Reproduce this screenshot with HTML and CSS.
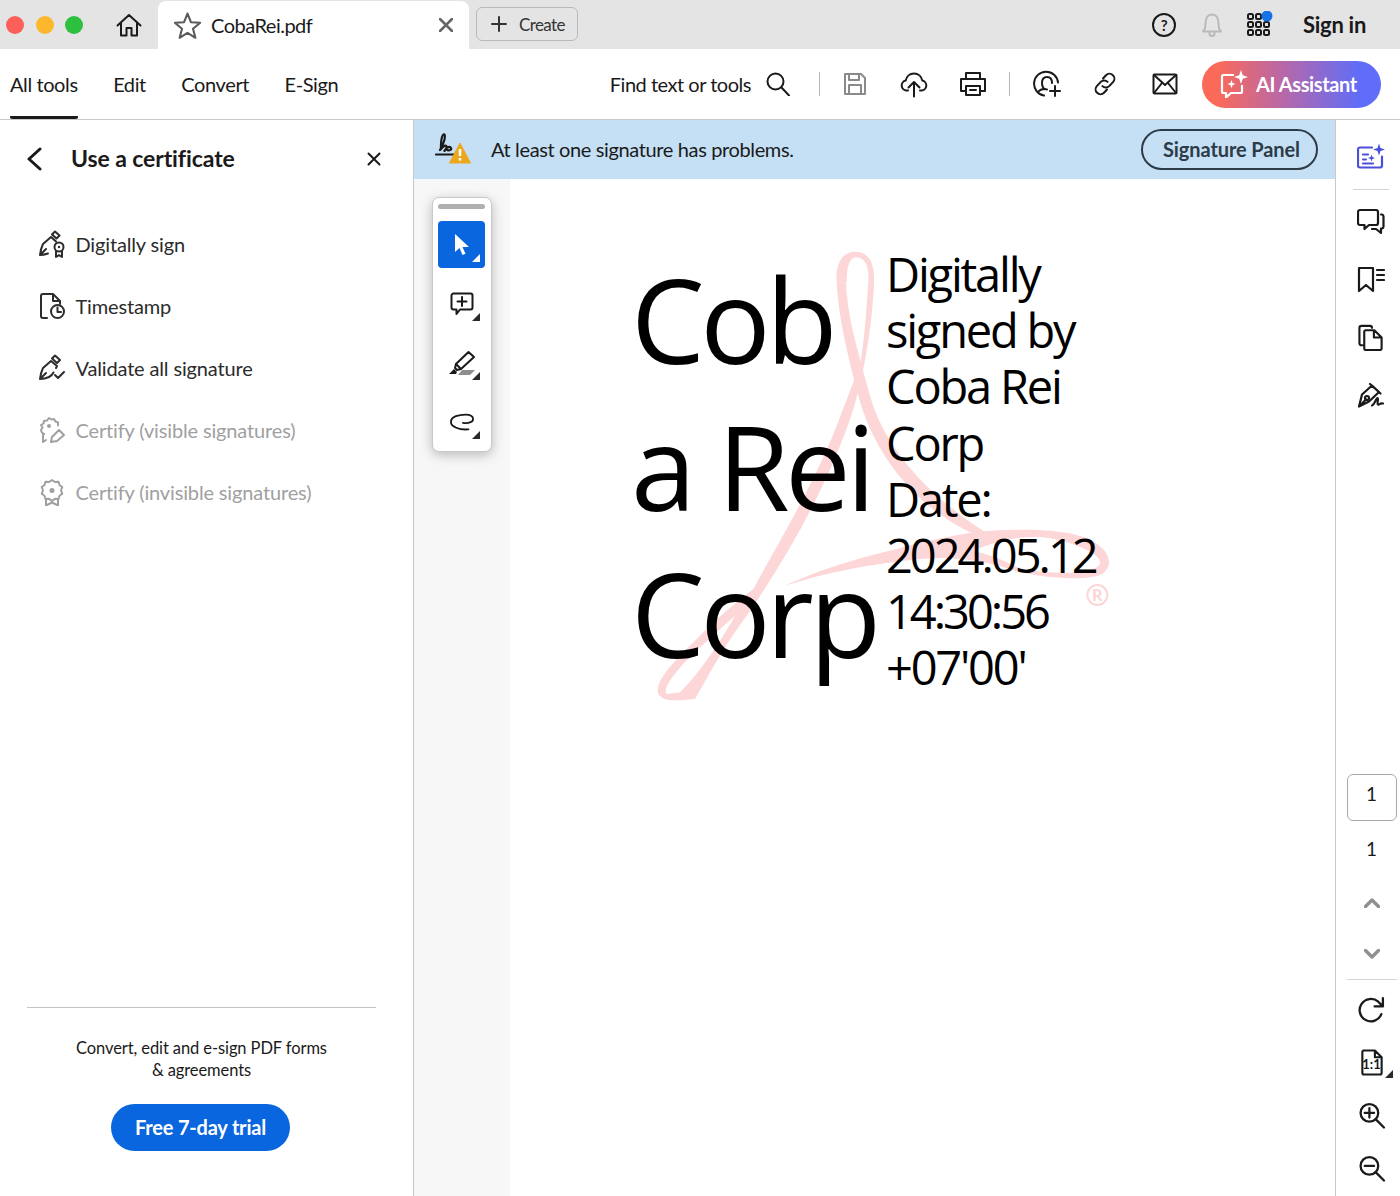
FILE: index.html
```html
<!DOCTYPE html>
<html lang="en">
<head>
  <meta charset="UTF-8" />
  <title>CobaRei.pdf</title>
  <link rel="stylesheet" href="styles.css">
</head>
<body>
  <div class="app">

    <!-- Title bar -->
    <header class="titlebar">
      <div class="lights">
        <span class="light red"></span>
        <span class="light yellow"></span>
        <span class="light green"></span>
      </div>
      <svg class="ic home" viewBox="0 0 26 24"><path d="M1.5 12.5 13 2l11.5 10.5M5 10v12.5h5.500V15h5v7.500H21V10"/></svg>
      <div class="tab">
        <svg class="ic star" viewBox="0 0 26 26"><path d="M13 1.500l3.300 8.300 8.900.6-6.900 5.700 2.300 8.700L13 20l-7.600 4.800 2.300-8.700L.8 10.400l8.900-.6z"/></svg>
        <span class="tab-name">CobaRei.pdf</span>
        <svg class="ic tab-x" viewBox="0 0 14 14"><path d="M1 1l12 12M13 1 1 13"/></svg>
      </div>
      <div class="create">
        <svg class="ic plus" viewBox="0 0 16 16"><path d="M8 1v14M1 8h14"/></svg>
        <span>Create</span>
      </div>
      <div class="title-right">
        <div class="help">?</div>
        <svg class="ic bell" viewBox="0 0 24 26"><path d="M3 19.500c2-2 2.500-4 2.500-8C5.500 6 8 2.500 12 2.500s6.500 3.500 6.500 9c0 4 .5 6 2.500 8zM9.500 20v1.500a2.500 2.500 0 0 0 5 0V20"/></svg>
        <svg class="apps" viewBox="0 0 26 26">
          <g class="apps-cells">
            <rect x="1" y="3" width="5" height="5" rx="1.500"/><rect x="9" y="3" width="5" height="5" rx="1.500"/>
            <rect x="1" y="11" width="5" height="5" rx="1.500"/><rect x="9" y="11" width="5" height="5" rx="1.500"/><rect x="17" y="11" width="5" height="5" rx="1.500"/>
            <rect x="1" y="19" width="5" height="5" rx="1.500"/><rect x="9" y="19" width="5" height="5" rx="1.500"/><rect x="17" y="19" width="5" height="5" rx="1.500"/>
          </g>
          <circle class="apps-dot" cx="20" cy="5" r="5.500"/>
        </svg>
        <span class="signin">Sign in</span>
      </div>
    </header>

    <!-- Main toolbar -->
    <nav class="toolbar">
      <ul class="tabs">
        <li class="active">All tools</li>
        <li>Edit</li>
        <li>Convert</li>
        <li>E-Sign</li>
      </ul>
      <div class="actions">
        <span class="find">Find text or tools</span>
        <svg class="ic search" viewBox="0 0 24 24"><circle cx="9.500" cy="9.500" r="8"/><path d="M15.500 15.500l7.500 8"/></svg>
        <span class="sep sep-a"></span>
        <svg class="ic save" viewBox="0 0 24 24"><path d="M2 2h16l4 4v16H2zM6 2v6h10V2M6 22v-9h12v9"/></svg>
        <svg class="ic cloud" viewBox="0 0 28 26"><path d="M8 19H6.500a5 5 0 0 1-.8-9.900C6.500 5 9.800 2 14 2s7.500 3 8.300 7.100a5 5 0 0 1-.8 9.900H20M14 25V11M8.500 16 14 10.500l5.500 5.500"/></svg>
        <svg class="ic print" viewBox="0 0 28 26"><path d="M7 8V2h14v6M7 20H2V8h24v12h-5M7 15h14v9H7zM11 19h6"/></svg>
        <span class="sep sep-b"></span>
        <svg class="ic userplus" viewBox="0 0 28 28"><path d="M11 25.500A12 12 0 1 1 25 12.500M14 19.500c-4 0-5-2.500-5-6.500s2-6 5-6 5 2 5 6M22 16v10M17 21h10"/><path d="M5 22c1.500-2 4-3 7-3"/></svg>
        <svg class="ic link" viewBox="0 0 24 24"><path d="M10 6.500l3-3.200a4.800 4.800 0 0 1 7 6.800l-3.800 4a4.800 4.800 0 0 1-6.800 0M14 17.500l-3 3.200a4.800 4.800 0 0 1-7-6.800l3.800-4a4.800 4.800 0 0 1 6.800 0"/></svg>
        <svg class="ic mail" viewBox="0 0 26 22"><rect x="1.500" y="1.500" width="23" height="19" rx="1"/><path d="M2 2l11 10L24 2M2 20l8-10M24 20l-8-10"/></svg>
        <div class="ai-btn">
          <svg class="ai-ic" viewBox="0 0 28 28"><path class="ai-line" d="M14 5H3.500A1.500 1.500 0 0 0 2 6.500v15A1.500 1.500 0 0 0 3.500 23H6v4.500l5-4.500h9.500a1.500 1.500 0 0 0 1.500-1.500V15"/><path class="ai-fill" d="M21 0l1.800 5.200L28 7l-5.200 1.800L21 14l-1.800-5.200L14 7l5.200-1.800zM11.500 10l1.100 3 3 1.100-3 1.100-1.100 3-1.100-3-3-1.100 3-1.100z"/></svg>
          <span>AI Assistant</span>
        </div>
      </div>
    </nav>

    <div class="body">

      <!-- Left panel -->
      <aside class="panel">
        <div class="panel-head">
          <svg class="ic back" viewBox="0 0 16 24"><path d="M14 2 3 12l11 10"/></svg>
          <h2>Use a certificate</h2>
          <svg class="ic panel-x" viewBox="0 0 14 14"><path d="M1.500 1.500l11 11M12.500 1.500l-11 11"/></svg>
        </div>
        <ul class="menu">
          <li>
            <svg class="ic menu-ic" viewBox="0 0 28 28"><path d="M2 25c.5-4 1.500-8 3-11l8-7 5 4.500M14 4.500l3-3 4.500 4-3 3zM2 25c3 0 5-.5 8-1.500M2 25l6-6"/><circle cx="21" cy="17" r="4.500"/><circle class="solid" cx="21" cy="17" r="1.200"/><path d="M18 21.500V27l3-1.800 3 1.800v-5.500"/></svg>
            <span>Digitally sign</span>
          </li>
          <li>
            <svg class="ic menu-ic" viewBox="0 0 28 28"><path d="M9 26H5a2 2 0 0 1-2-2V4a2 2 0 0 1 2-2h10l7 7v3M15 2v7h7"/><circle cx="19.500" cy="19.500" r="6.500"/><path d="M19.500 15.500v4.500h3.500"/></svg>
            <span>Timestamp</span>
          </li>
          <li>
            <svg class="ic menu-ic" viewBox="0 0 28 28"><path d="M2 25c.5-4 1.500-8 3-11l8-7 6 5-1 2M14 4.500l3-3 5 4.500-3 3zM2 25c3 0 6-.5 9-2 2-1 3.500-2.500 4.500-4.500M2 25l6-6M17 21l3 3 6-6"/></svg>
            <span>Validate all signature</span>
          </li>
          <li class="off">
            <svg class="ic menu-ic" viewBox="0 0 28 28"><path d="M6 18a5 5 0 0 1-3-4l1.500-2.500L3 9l2.500-1.500L6 5l3-.5L11 2l2.500 1.500L16 3l1.500 2.500 2.500 1v3"/><circle class="solid" cx="11" cy="10" r="2"/><path d="M5 18v8l3-2M13 26l1-5 7-7 5 5-7 6z"/></svg>
            <span>Certify (visible signatures)</span>
          </li>
          <li class="off">
            <svg class="ic menu-ic" viewBox="0 0 28 28"><path d="M14 2l3 2 3.500-.3 1 3.300 2.800 2L23 12.500l1.300 3.300-2.800 2-1 3.300-3.500-.3-3 2-3-2-3.500.3-1-3.300-2.800-2L5 12.500 3.700 9l2.800-2 1-3.300 3.500.3z"/><circle class="solid" cx="14" cy="12.500" r="2.500"/><path d="M8 21v6.500l6-3 6 3V21"/></svg>
            <span>Certify (invisible signatures)</span>
          </li>
        </ul>
        <div class="panel-foot">
          <p>Convert, edit and e-sign PDF forms<br>&amp; agreements</p>
          <div class="trial">Free 7-day trial</div>
        </div>
      </aside>

      <!-- Document -->
      <main class="doc">
        <div class="banner">
          <svg class="sig-ic" viewBox="0 0 36 32">
            <path class="sig-ink" d="M1 22.500h18M5 18C8 13 11 5 9.500 2.500 7.500 1 5.500 8 6 17M6 17c3-4 6-4.500 5.500-1.500S8 20 10 18c2-3 5-4 6-2s-2 3-3.500 2"/>
            <path class="sig-warn" d="M25 11 35.500 31h-21z"/>
            <path class="sig-mark" d="M25 17v7M25 26v2.500"/>
          </svg>
          <span class="banner-text">At least one signature has problems.</span>
          <div class="sig-panel">Signature Panel</div>
        </div>
        <div class="viewer">
          <div class="gutter">
            <div class="float-tools">
              <div class="handle"></div>
              <div class="ft on">
                <svg class="cursor" viewBox="0 0 16 24"><path d="M1 1v18l4.500-4 3 7 3-1.300-3-6.700H15z"/></svg>
                <span class="tri"></span>
              </div>
              <div class="ft">
                <svg class="ic ft-ic" viewBox="0 0 24 24"><path d="M3.500 1.500h17a2 2 0 0 1 2 2v12a2 2 0 0 1-2 2H10L6.500 22v-4.500h-3a2 2 0 0 1-2-2v-12a2 2 0 0 1 2-2zM12 5v9M7.500 9.500h9"/></svg>
                <span class="tri"></span>
              </div>
              <div class="ft">
                <svg class="hl" viewBox="0 0 28 26"><path class="hl-body" d="M20.500 2 26 7 13 19l-5-5zM8 14l-1 4 2 2 4-1"/><path class="hl-tip" d="M1 24l5-5 3 3-1 2z"/><path class="hl-bar" d="M14 20h13l-5 5H10z"/></svg>
                <span class="tri"></span>
              </div>
              <div class="ft">
                <svg class="ic ft-ic" viewBox="0 0 26 18"><path d="M20 17C10 18 1 14 1 9 1 3 10 1 17 1c5 0 8 2 8 5s-5 5-11 4"/></svg>
                <span class="tri"></span>
              </div>
            </div>
          </div>
          <div class="page">
            <div class="stamp">
              <svg class="acro" viewBox="0 0 1500 1410">
                <path d="M650 130C655 230 680 340 715 470 760 640 880 800 1060 885L1130 900C960 800 800 650 750 470 715 340 680 230 678 130Z"/>
                <path fill-rule="evenodd" d="M650 130C645 70 670 38 705 38 745 38 765 70 762 130 758 240 735 400 700 510 640 700 520 930 380 1130 320 1210 270 1300 225 1380 170 1385 130 1390 115 1365 105 1330 150 1280 200 1230 250 1180 300 1130 350 1090L400 1050C470 920 580 740 650 560L715 390C695 320 678 220 680 130ZM680 130C680 80 690 55 708 55 735 55 748 80 745 130 740 200 735 300 718 390 700 320 680 220 680 130ZM140 1365C125 1350 170 1290 240 1225 280 1190 310 1160 345 1130 300 1210 240 1300 180 1360Z"/>
                <path fill-rule="evenodd" d="M1060 880C1180 868 1330 868 1400 898 1465 925 1485 975 1450 1002 1420 1025 1300 1022 1200 1000 1100 965 1000 950 900 960 750 975 620 1000 495 1040 580 1000 700 960 830 930 900 910 1000 890 1060 880ZM1270 895C1350 905 1450 945 1440 975 1420 1010 1300 1005 1200 990 1150 960 1100 945 1060 935 1130 905 1200 890 1270 895Z"/>
                <circle class="acro-r" cx="1432" cy="1068" r="30"/>
                <text class="acro-rt" x="1432" y="1086">R</text>
              </svg>
              <div class="stamp-name">Cob<br>a Rei<br>Corp</div>
              <div class="stamp-info">Digitally<br>signed by<br>Coba Rei<br>Corp<br>Date:<br><span class="digits">2024.05.12</span><br><span class="digits">14:30:56</span><br>+07'00'</div>
            </div>
          </div>
        </div>
      </main>

      <!-- Right rail -->
      <aside class="rail">
        <div class="rail-top">
          <svg class="ic rail-ic ai-rail" viewBox="0 0 28 26"><path d="M15 4H3a2 2 0 0 0-2 2v16a2 2 0 0 0 2 2h20a2 2 0 0 0 2-2V13M6 11h5M6 16h3M6 20h10"/><path class="solid" d="M22 0l1.500 4.500L28 6l-4.500 1.500L22 12l-1.500-4.500L16 6l4.500-1.500zM14.500 11l.9 2.600 2.600.9-2.600.9-.9 2.600-.9-2.600-2.600-.9 2.600-.9z"/></svg>
          <span class="rail-sep"></span>
          <svg class="ic rail-ic" viewBox="0 0 28 26"><path d="M3 1.500h16a2 2 0 0 1 2 2v11a2 2 0 0 1-2 2h-7l-4.500 4v-4H3a2 2 0 0 1-2-2v-11a2 2 0 0 1 2-2zM24 6h1a2 2 0 0 1 1.500 2v10a2 2 0 0 1-1.500 2h-1v4.500L19 20.500h-4"/></svg>
          <svg class="ic rail-ic" viewBox="0 0 28 26"><path d="M2 1.500h14v23l-7-6-7 6zM20 3.500h7M20 8.500h7M20 13.500h7"/></svg>
          <svg class="ic rail-ic" viewBox="0 0 28 28"><path d="M5 22H4a2 2 0 0 1-2-2V4a2 2 0 0 1 2-2h9a2 2 0 0 1 2 2M7 8a1.500 1.500 0 0 1 1.500-1.500h9L25 14v11.500a1.500 1.500 0 0 1-1.500 1.500h-15A1.500 1.500 0 0 1 7 25.500zM17 6.500V14h8"/></svg>
          <svg class="ic rail-ic" viewBox="0 0 28 26"><path d="M2 24l3-12L15 3l7 6.500-10 9.500zM2 24l7-7M13 1.500l10.500 9.500"/><circle cx="10" cy="15.500" r="2"/><path d="M15 23c3-1 4-8 5.500-7.500s-1 6 .5 6.500 2-2 5-1"/></svg>
        </div>
        <div class="rail-bottom">
          <div class="page-box">1</div>
          <div class="page-total">1</div>
          <svg class="ic chev" viewBox="0 0 16 10"><path d="M1.500 8.500 8 2l6.500 6.500"/></svg>
          <svg class="ic chev" viewBox="0 0 16 10"><path d="M1.500 1.500 8 8l6.500-6.500"/></svg>
          <span class="rail-sep wide"></span>
          <svg class="ic rail-ic" viewBox="0 0 26 26"><path d="M22 17.500A10.800 10.800 0 1 1 19 5.500L23.500 10M23.500 2v8h-8"/></svg>
          <div class="fit">
            <svg class="ic rail-ic" viewBox="0 0 24 28"><path d="M3 1.500h12l7 7V25a1.500 1.500 0 0 1-1.500 1.500h-17A1.500 1.500 0 0 1 2 25V3a1.500 1.500 0 0 1 1-1.500zM15 1.500v7h7"/></svg>
            <span class="fit-label">1:1</span>
            <span class="tri"></span>
          </div>
          <svg class="ic rail-ic" viewBox="0 0 26 26"><circle cx="10.500" cy="10.500" r="8.500"/><path d="M16.500 16.500l8 8M10.500 6v9M6 10.500h9"/></svg>
          <svg class="ic rail-ic" viewBox="0 0 26 26"><circle cx="10.500" cy="10.500" r="8.500"/><path d="M16.500 16.500l8 8M6 10.500h9"/></svg>
        </div>
      </aside>
    </div>
  </div>
</body>
</html>
```

FILE: styles.css
```css
* {
  box-sizing: border-box;
}
body {
  margin: 0;
  font-family: Lato, "Noto Sans", sans-serif;
  color: #1a1a1a;
  background: #fff;
}
ul {
  list-style: none;
  margin: 0;
  padding: 0;
}
.app {
  width: 1400px;
  height: 1196px;
  display: flex;
  flex-direction: column;
  overflow: hidden;
}
.ic {
  fill: none;
  stroke: currentColor;
  stroke-width: 2;
  stroke-linecap: round;
  stroke-linejoin: round;
  flex: none;
  display: block;
}
.ic .solid {
  fill: currentColor;
  stroke: none;
}

/* title bar */
.titlebar {
  height: 49px;
  flex: none;
  background: #e4e4e4;
  display: flex;
  align-items: center;
  padding-left: 6px;
}
.lights {
  display: flex;
  gap: 11.5px;
}
.light {
  width: 18px;
  height: 18px;
  border-radius: 50%;
}
.red { background: #fb5f57; }
.yellow { background: #fdb72c; }
.green { background: #2cc03e; }
.home {
  width: 26px;
  height: 24px;
  margin-left: 33px;
  margin-right: 16px;
}
.tab {
  width: 311px;
  height: 48px;
  margin-top: 1px;
  align-self: flex-start;
  background: #fff;
  border-radius: 8px 8px 0 0;
  display: flex;
  align-items: center;
  padding: 0 8px 0 16px;
}
.star {
  width: 27px;
  height: 27px;
  color: #5a5a5a;
}
.tab-name {
  font-size: 20px;
  letter-spacing: -0.5px;
  margin-left: 10px;
  flex: 1;
}
.tab-x {
  width: 14px;
  height: 14px;
  stroke-width: 2.6;
  color: #666;
  margin-right: 8px;
}
.create {
  width: 102px;
  height: 34px;
  margin-left: 7px;
  margin-top: -1px;
  border: 1px solid #b9b9b9;
  border-radius: 6px;
  display: flex;
  align-items: center;
  padding-left: 14px;
  font-size: 17px;
  letter-spacing: -0.6px;
  color: #333;
  gap: 12px;
}
.plus {
  width: 16px;
  height: 16px;
}
.title-right {
  margin-left: auto;
  display: flex;
  align-items: center;
}
.help {
  width: 24px;
  height: 24px;
  border: 2px solid #1a1a1a;
  border-radius: 50%;
  text-align: center;
  font-size: 15px;
  font-weight: 700;
  line-height: 20px;
}
.bell {
  width: 24px;
  height: 26px;
  color: #b9b9b9;
  margin-left: 24px;
}
.apps {
  width: 26px;
  height: 26px;
  margin-left: 23px;
  margin-top: -2px;
}
.apps-cells rect {
  fill: none;
  stroke: #1a1a1a;
  stroke-width: 2;
}
.apps-dot {
  fill: #1473e6;
}
.signin {
  font-size: 22px;
  font-weight: 700;
  letter-spacing: -0.3px;
  margin-left: 30px;
  margin-right: 34px;
}

/* toolbar */
.toolbar {
  height: 71px;
  flex: none;
  border-bottom: 1px solid #c9c9c9;
  display: flex;
  align-items: stretch;
}
.tabs {
  display: flex;
  gap: 35.5px;
  padding-left: 10px;
}
.tabs li {
  font-size: 20px;
  line-height: 70px;
  height: 70px;
  letter-spacing: -0.4px;
}
.tabs .active {
  border-bottom: 3px solid #1a1a1a;
  border-radius: 0 0 2px 2px;
}
.actions {
  margin-left: auto;
  display: flex;
  align-items: center;
  padding-right: 19px;
}
.find {
  font-size: 20px;
  letter-spacing: -0.48px;
}
.search { width: 24px; height: 24px; margin-left: 15px; }
.sep {
  width: 1px;
  height: 24px;
  background: #b5b5b5;
}
.sep-a { margin-left: 29px; }
.save { width: 24px; height: 24px; margin-left: 23px; color: #8a8a8a; }
.cloud { width: 28px; height: 27px; margin-left: 33px; }
.print { width: 28px; height: 26px; margin-left: 31px; }
.sep-b { margin-left: 22px; }
.userplus { width: 28px; height: 28px; margin-left: 23px; }
.link { width: 24px; height: 24px; margin-left: 32px; }
.mail { width: 26px; height: 22px; margin-left: 35px; }
.ai-btn {
  width: 179px;
  height: 47px;
  margin-left: 24px;
  border-radius: 24px;
  background: linear-gradient(90deg, #fb6a58 0%, #fb6a58 8%, #b868a8 45%, #5f6df8 88%);
  color: #fff;
  display: flex;
  align-items: center;
  padding-left: 18px;
  gap: 8px;
  font-size: 20px;
  font-weight: 700;
  letter-spacing: -0.4px;
}
.ai-ic { width: 28px; height: 28px; flex: none; }
.ai-line { fill: none; stroke: #fff; stroke-width: 2.2; stroke-linejoin: round; }
.ai-fill { fill: #fff; }

/* layout below toolbar */
.body {
  flex: 1;
  display: flex;
  min-height: 0;
}

/* left panel */
.panel {
  width: 414px;
  flex: none;
  border-right: 1px solid #c9c9c9;
  display: flex;
  flex-direction: column;
}
.panel-head {
  height: 78px;
  display: flex;
  align-items: center;
  padding: 0 32px 0 26px;
}
.back { width: 16px; height: 24px; stroke-width: 3; }
.panel-head h2 {
  margin: -2px 0 0 29px;
  font-size: 23px;
  font-weight: 700;
  letter-spacing: -0.1px;
  flex: 1;
}
.panel-x { width: 14px; height: 14px; }
.menu {
  margin-top: 15px;
  padding-left: 38px;
}
.menu li {
  height: 62px;
  display: flex;
  align-items: center;
  gap: 9.5px;
  font-size: 20px;
  letter-spacing: -0.15px;
  color: #2c2c2c;
}
.menu .off {
  color: #a0a0a0;
}
.menu-ic {
  width: 28px;
  height: 28px;
  stroke-width: 2;
}
.panel-foot {
  margin: auto 37px 0 27px;
  border-top: 1px solid #c4c4c4;
  height: 189px;
  text-align: center;
}
.panel-foot p {
  margin: 29px 0 0;
  font-size: 16.5px;
  line-height: 22px;
  letter-spacing: -0.1px;
}
.trial {
  width: 179px;
  height: 47px;
  margin: 23px 0 0 84px;
  border-radius: 24px;
  background: #0a66de;
  color: #fff;
  font-size: 20px;
  font-weight: 700;
  line-height: 47px;
  letter-spacing: -0.2px;
}

/* document */
.doc {
  flex: 1;
  min-width: 0;
  display: flex;
  flex-direction: column;
}
.banner {
  height: 59px;
  flex: none;
  background: #c5e0f5;
  display: flex;
  align-items: center;
  padding: 0 17px 0 21px;
}
.sig-ic { width: 36px; height: 32px; margin-top: -3px; }
.sig-ink { fill: none; stroke: #1a1a1a; stroke-width: 2.2; stroke-linecap: round; }
.sig-warn { fill: #eda71c; stroke: #eda71c; stroke-width: 1; stroke-linejoin: round; }
.sig-mark { fill: none; stroke: #fff; stroke-width: 2.5; }
.banner-text {
  font-size: 20px;
  line-height: 24px;
  margin-top: -2px;
  letter-spacing: -0.37px;
  margin-left: 20px;
  flex: 1;
}
.sig-panel {
  width: 177px;
  height: 41px;
  border: 2.5px solid #2c3b47;
  border-radius: 21px;
  padding-left: 4px;
  text-align: center;
  font-size: 20px;
  font-weight: 700;
  line-height: 36px;
  color: #2c3b47;
  letter-spacing: -0.1px;
}
.viewer {
  flex: 1;
  display: flex;
  min-height: 0;
}
.gutter {
  width: 96px;
  flex: none;
  background: #f7f7f7;
  padding: 18px 0 0 18px;
}
.float-tools {
  width: 60px;
  height: 255px;
  background: #fff;
  border: 1px solid #c9c9c9;
  border-radius: 7px;
  box-shadow: 0 3px 12px rgba(0, 0, 0, 0.25);
  padding: 6px 6px 6px 5px;
}
.handle {
  height: 5px;
  width: 47px;
  background: #b0b0b0;
  border-radius: 3px;
}
.ft {
  position: relative;
  width: 47px;
  height: 47px;
  margin-top: 12px;
  border-radius: 4px;
  display: flex;
  align-items: center;
  justify-content: center;
}
.ft.on {
  background: #0a66de;
}
.cursor {
  width: 16px;
  height: 24px;
  fill: #fff;
}
.ft-ic {
  width: 24px;
  height: 24px;
}
.hl {
  width: 28px;
  height: 26px;
}
.hl-body { fill: none; stroke: #1a1a1a; stroke-width: 2; stroke-linejoin: round; }
.hl-tip { fill: #1a1a1a; }
.hl-bar { fill: #8e8e8e; }
.tri {
  position: absolute;
  right: 5px;
  bottom: 6px;
  width: 0;
  height: 0;
  border-left: 8px solid transparent;
  border-bottom: 8px solid #2a2a2a;
}
.ft.on .tri {
  border-bottom-color: #fff;
}
.page {
  flex: 1;
  background: #fff;
}
.stamp {
  position: relative;
  margin: 66px 0 0 121px;
  width: 480px;
  display: flex;
  font-family: "Open Sans", sans-serif;
  color: #000;
}
.acro {
  position: absolute;
  left: -11px;
  top: -6px;
  width: 500px;
  height: 470px;
}
.acro path { fill: #fdd7d7; }
.acro-r { fill: none; stroke: #fdd7d7; stroke-width: 6; }
.acro-rt {
  fill: #fdd7d7;
  font-size: 50px;
  font-weight: 700;
  text-anchor: middle;
}
.stamp-name,
.stamp-info {
  position: relative;
}
.stamp-name {
  width: 255px;
  font-size: 117px;
  line-height: 147px;
  letter-spacing: -4.5px;
}
.stamp-info {
  padding-top: 1px;
  font-size: 47px;
  line-height: 56.2px;
  letter-spacing: -2.2px;
}
.digits {
  letter-spacing: -3px;
}

/* right rail */
.rail {
  width: 65px;
  flex: none;
  border-left: 1px solid #c9c9c9;
  display: flex;
  flex-direction: column;
  justify-content: space-between;
  align-items: center;
}
.rail-top {
  display: flex;
  flex-direction: column;
  align-items: center;
  margin-left: 5px;
  padding-top: 23px;
  gap: 31px;
}
.rail-ic {
  width: 28px;
  height: 27px;
  stroke-width: 2.2;
}
.ai-rail { color: #4a50d8; }
.rail-sep {
  width: 36px;
  height: 1px;
  background: #d4d4d4;
  margin: -12px 0 -13px;
}
.rail-bottom {
  display: flex;
  flex-direction: column;
  align-items: center;
  margin-left: 7px;
  padding-bottom: 14px;
  gap: 26px;
}
.page-box {
  width: 50px;
  height: 47px;
  border: 1px solid #a8a8a8;
  border-radius: 6px;
  text-align: center;
  font-size: 19px;
  line-height: 38px;
}
.page-total {
  font-size: 19px;
  line-height: 20px;
  margin: -8px 0 4.5px;
}
.chev {
  width: 16px;
  height: 10px;
  color: #909090;
  stroke-width: 3.4;
  margin-top: 8.5px;
  margin-bottom: 6.5px;
}
.rail-sep.wide {
  width: 50px;
  margin: -12.5px 0 -10px;
}
.fit {
  position: relative;
}
.fit-label {
  position: absolute;
  left: 0;
  right: 0;
  top: 7px;
  text-align: center;
  font-size: 13px;
  font-weight: 700;
}
.fit .tri {
  right: -7px;
  bottom: -2px;
}
```
